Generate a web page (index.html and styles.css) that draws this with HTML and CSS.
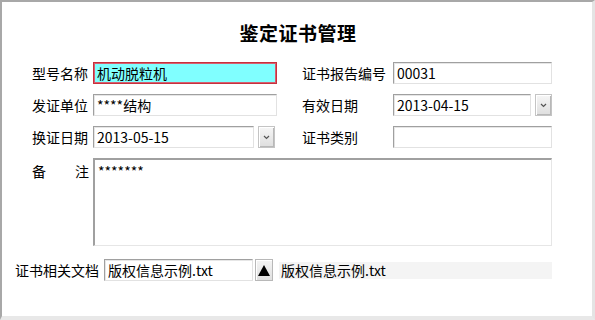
FILE: index.html
```html
<!DOCTYPE html>
<html lang="zh-CN">
<head>
<meta charset="utf-8">
<title>鉴定证书管理</title>
<link rel="stylesheet" href="styles.css">
</head>
<body>
<div class="frame">
  <h1 class="title">鉴定证书管理</h1>
  <div class="form">
    <label class="lbl">型号名称</label>
    <input class="field active" type="text" value="机动脱粒机">
    <span></span>
    <label class="lbl">证书报告编号</label>
    <input class="field" type="text" value="00031">

    <label class="lbl">发证单位</label>
    <input class="field" type="text" value="****结构">
    <span></span>
    <label class="lbl">有效日期</label>
    <div class="combo">
      <input class="field" type="text" value="2013-04-15">
      <button class="drop" type="button"><svg width="7" height="5" viewBox="0 0 7 5"><path d="M1 1 L3.5 3.5 L6 1" fill="none" stroke="#555" stroke-width="1.2"/></svg></button>
    </div>

    <label class="lbl">换证日期</label>
    <div class="combo left">
      <input class="field" type="text" value="2013-05-15">
      <button class="drop" type="button"><svg width="7" height="5" viewBox="0 0 7 5"><path d="M1 1 L3.5 3.5 L6 1" fill="none" stroke="#555" stroke-width="1.2"/></svg></button>
    </div>
    <span></span>
    <label class="lbl">证书类别</label>
    <input class="field" type="text" value="">

    <label class="lbl memo-lbl"><span>备</span><span>注</span></label>
    <textarea class="memo">*******</textarea>
  </div>
  <div class="docrow">
    <label class="lbl doc-lbl">证书相关文档</label>
    <input class="field doc" type="text" value="版权信息示例.txt">
    <button class="up" type="button"><svg width="12" height="11" viewBox="0 0 12 11"><path d="M6 0 L12 11 L0 11 Z" fill="#000"/></svg></button>
    <div class="docname">版权信息示例.txt</div>
  </div>
</div>
</body>
</html>
```
FILE: styles.css
```css
* { box-sizing: border-box; }
html, body { margin: 0; padding: 0; background: #fff; }
body { font-family: "Noto Sans CJK SC", "Noto Sans", sans-serif; color: #000; }

.frame {
  width: 595px;
  height: 320px;
  border-top: 2px solid #a8a8a8;
  border-left: 2px solid #a8a8a8;
  border-right: 3px solid #e4e4e4;
  border-bottom: 4px solid #e8e8e8;
  padding-top: 17px;
}

.title {
  margin: 0;
  height: 28px;
  font-size: 19px;
  font-weight: 700;
  line-height: 28px;
  text-align: center;
  padding-left: 2px;
  letter-spacing: 0.5px;
}

.form {
  margin-top: 15px;
  padding-left: 30px;
  display: grid;
  grid-template-columns: 61px 184px 25px 91px 159px;
  grid-auto-rows: 22px;
  grid-template-rows: 22px 22px 22px 88px;
  row-gap: 10px;
}

.lbl {
  font-size: 14px;
  line-height: 22px;
  white-space: nowrap;
}

.field {
  height: 22px;
  width: 100%;
  margin: 0;
  padding: 0 3px;
  font-family: "Noto Sans CJK SC", sans-serif;
  font-size: 14px;
  color: #000;
  background: #fff;
  border: 1px solid #e2e2e2;
  border-top-color: #a0a0a0;
  border-left-color: #a0a0a0;
  box-shadow: inset 1px 1px 0 #e6e6e6;
  outline: none;
}

.field.active {
  background: #80ffff;
  border: 1px solid #c8303c;
  box-shadow: inset 0 0 0 1px #d46070;
}

.combo {
  display: flex;
  align-items: stretch;
  gap: 4px;
}
.combo .field { width: 138px; }
.combo.left .field { width: 161px; }

.drop {
  width: 17px;
  height: 22px;
  padding: 0;
  margin: 0;
  border: 1px solid #c4c4c4;
  background: linear-gradient(#f6f6f6, #dedede);
  box-shadow: inset 1px 1px 0 #fff, inset -1px -1px 0 #b8b8b8;
  display: flex;
  align-items: center;
  justify-content: center;
}

.memo-lbl {
  display: flex;
  justify-content: space-between;
  width: 57px;
  line-height: 22px;
  padding-top: 2px;
}

.memo {
  grid-column: 2 / 6;
  height: 88px;
  margin: 0;
  padding: 2px 3px;
  resize: none;
  font-family: "Noto Sans CJK SC", sans-serif;
  font-size: 14px;
  line-height: 18px;
  border: 1px solid #e6e6e6;
  border-top: 2px solid #a0a0a0;
  border-left: 2px solid #a0a0a0;
  outline: none;
}

.docrow {
  margin-top: 13px;
  padding-left: 13px;
  display: flex;
  align-items: center;
  height: 22px;
}

.doc-lbl { width: 89px; }

.field.doc { width: 149px; }

.up {
  width: 18px;
  height: 22px;
  margin: 0 0 0 2px;
  padding: 0;
  border: 1px solid #b8b8b8;
  background: linear-gradient(#f4f4f4, #e0e0e0);
  box-shadow: inset 1px 1px 0 #fff;
  display: flex;
  align-items: center;
  justify-content: center;
}

.docname {
  margin-left: 6px;
  width: 273px;
  height: 17px;
  background: #f4f4f4;
  font-size: 14px;
  line-height: 17px;
  padding-left: 2px;
  white-space: nowrap;
}
```
